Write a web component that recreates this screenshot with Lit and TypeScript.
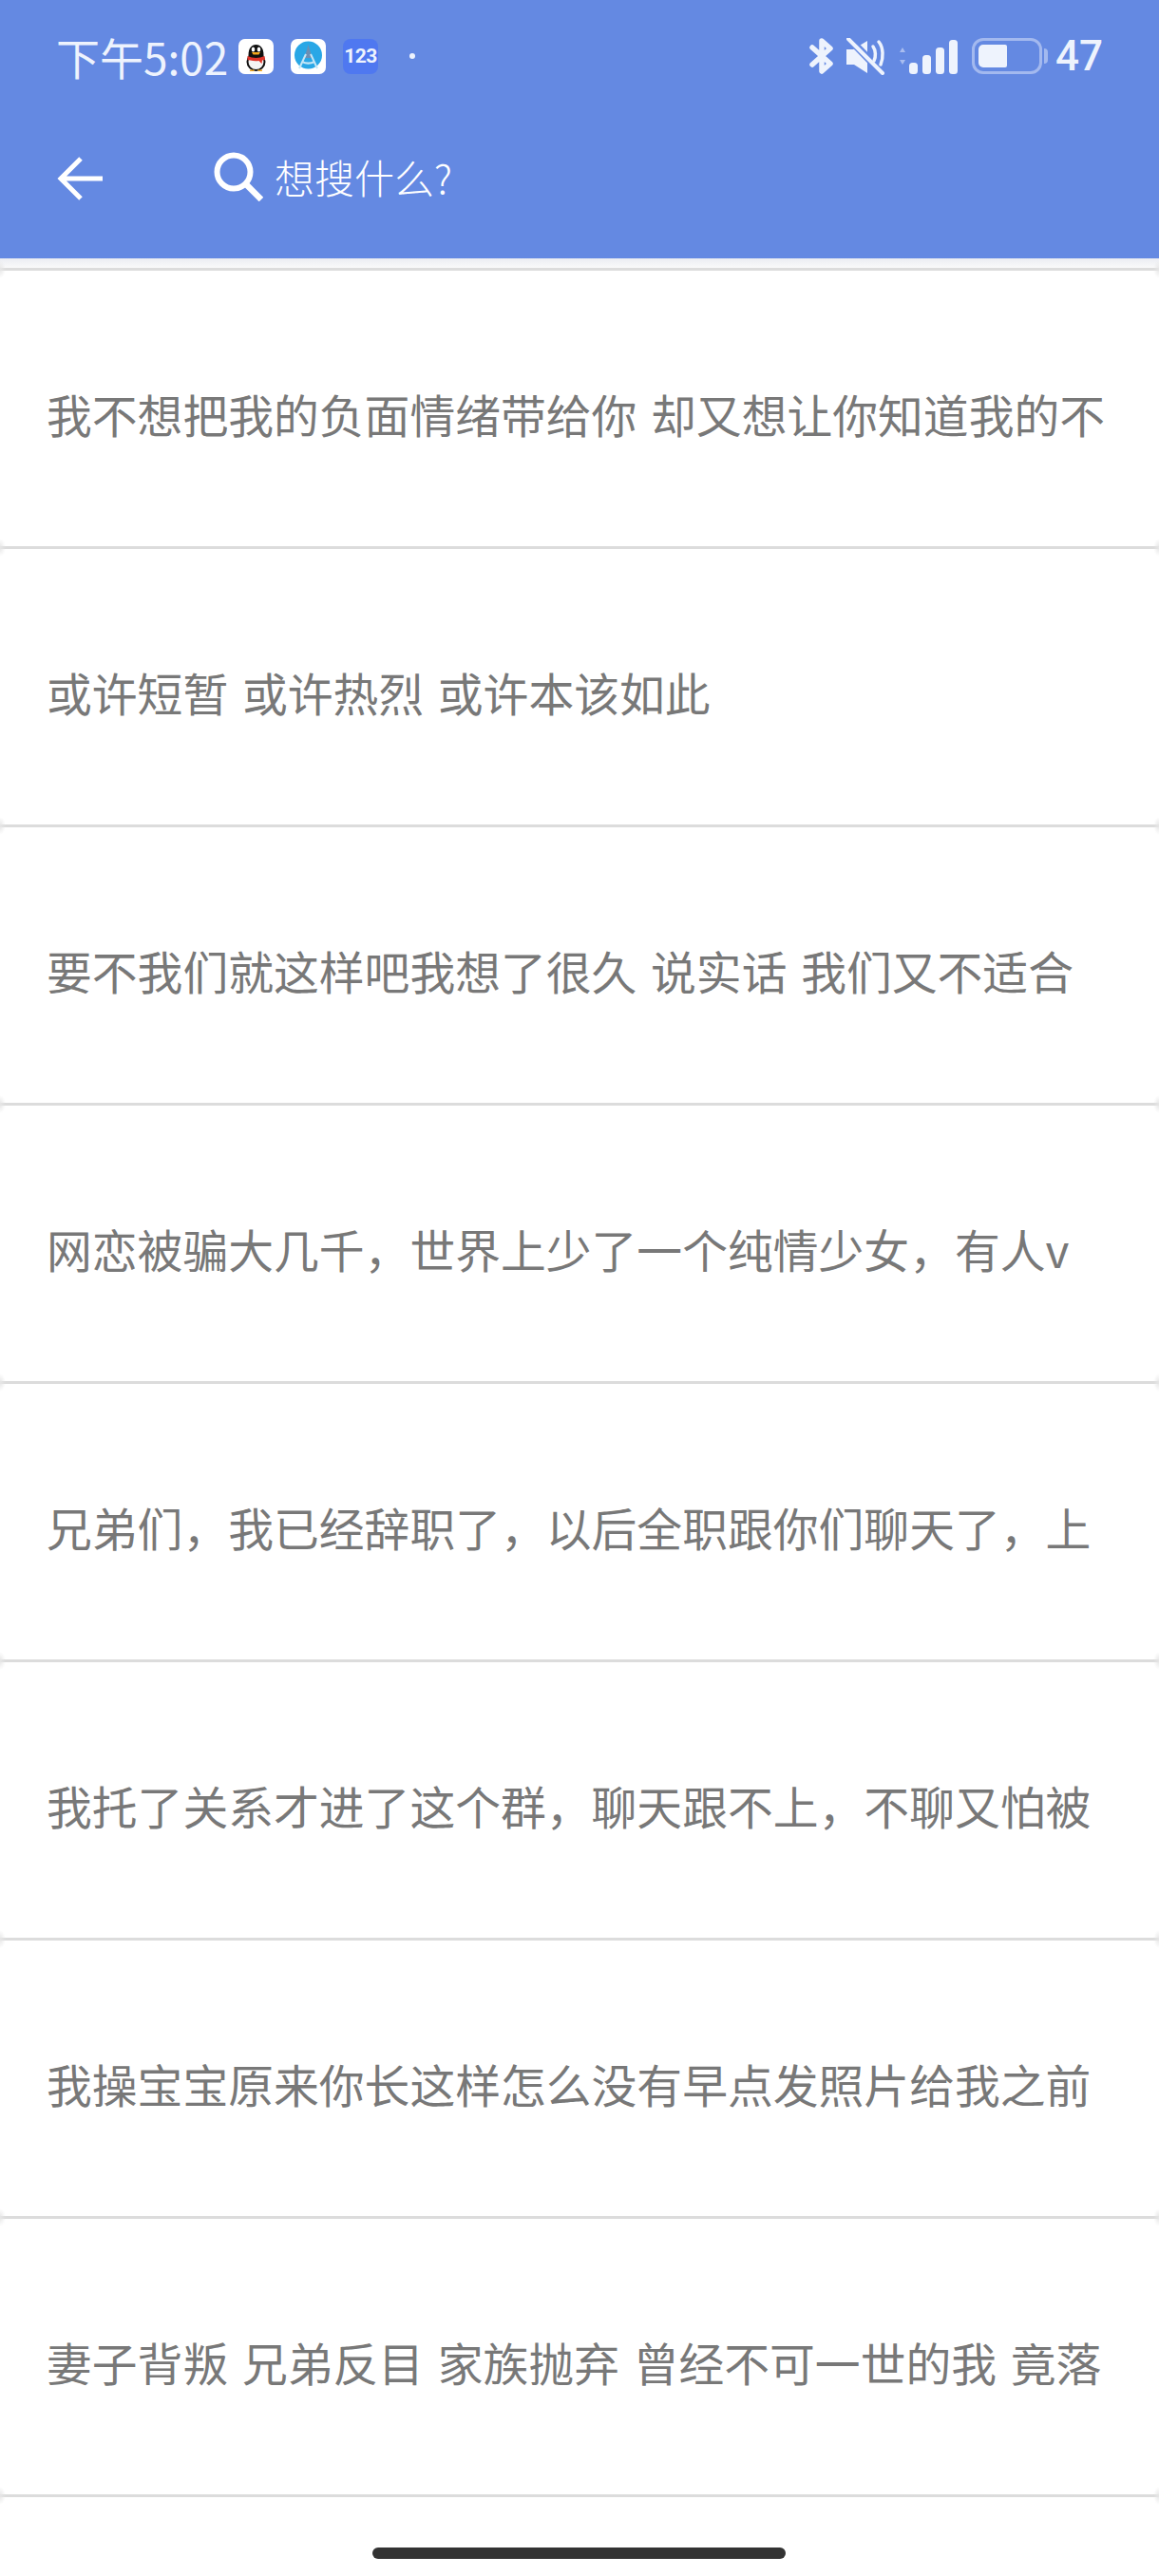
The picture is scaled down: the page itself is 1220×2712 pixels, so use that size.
import { LitElement, html, css, svg } from "lit";
import { customElement } from "lit/decorators.js";

const ROWS = [
  "我不想把我的负面情绪带给你 却又想让你知道我的不",
  "或许短暂 或许热烈 或许本该如此",
  "要不我们就这样吧我想了很久 说实话 我们又不适合",
  "网恋被骗大几千，世界上少了一个纯情少女，有人v",
  "兄弟们，我已经辞职了，以后全职跟你们聊天了，上",
  "我托了关系才进了这个群，聊天跟不上，不聊又怕被",
  "我操宝宝原来你长这样怎么没有早点发照片给我之前",
  "妻子背叛 兄弟反目 家族抛弃 曾经不可一世的我 竟落",
];

const qq = svg`<svg class="ic" viewBox="0 0 37 37">
  <rect width="37" height="37" rx="7" fill="#fff"/>
  <ellipse cx="18.500" cy="24" rx="9" ry="9" fill="#f4f4f4" stroke="#111" stroke-width="2"/>
  <path d="M10.500 17c0-7 3-11 8-11s8 4 8 11v3H10.500z" fill="#111"/>
  <ellipse cx="15.500" cy="11" rx="1.800" ry="2.500" fill="#fff"/>
  <ellipse cx="21.500" cy="11" rx="1.800" ry="2.500" fill="#fff"/>
  <path d="M14 14h9l-1.500 2.500h-6z" fill="#f2a81d"/>
  <path d="M9.500 18c6 2.500 12 2.500 18 0l.5 4-3 .5-.5 3.500-3-3c-3 .5-6 .3-9-.5l-3-.5z" fill="#e0352b"/>
  <path d="M12 32.500h5l-1 1.500h-4zM20 32.500h5v1.500h-4z" fill="#f2a81d"/>
</svg>`;

const studio = svg`<svg class="ic" viewBox="0 0 37 37">
  <rect width="37" height="37" rx="7" fill="#fff"/>
  <circle cx="18.500" cy="17" r="14.500" fill="#29a7e6"/>
  <path d="M18.500 6l4 14h-8z" fill="#6d8fb3"/>
  <path d="M16 16L9 31M21 16l7 15M12 24c4 2 9 2 13 0" fill="none" stroke="#c4e6f6" stroke-width="2"/>
</svg>`;

const arrowIcon = svg`<svg class="back" viewBox="0 0 48 48">
  <path d="M48 24H4M25 3L4 24l21 21" fill="none" stroke="#fff" stroke-width="5"/>
</svg>`;

const searchIcon = svg`<svg class="search" viewBox="0 0 52 52">
  <circle cx="21" cy="21" r="17.500" fill="none" stroke="#fff" stroke-width="6"/>
  <path d="M33.500 33.500L50 50" fill="none" stroke="#fff" stroke-width="6.500"/>
</svg>`;

const bluetooth = svg`<svg class="bt" viewBox="0 0 27 38">
  <path d="M3 10l19 17-9 8V3l9 8L3 28" fill="none" stroke="#eef3fd" stroke-width="5.500" stroke-linejoin="round" stroke-linecap="round"/>
</svg>`;

const mute = svg`<svg class="mute" viewBox="0 0 42 39">
  <path d="M0 12h7L22 3v34L8 28H0z" fill="#eef3fd"/>
  <path d="M3 1l35 36" stroke="#6489e2" stroke-width="8"/>
  <path d="M2 1l36 36" stroke="#eef3fd" stroke-width="4" stroke-linecap="round"/>
  <path d="M28 9c3 4 3 11 1 15M34 4c5 6 5 17 2 24" fill="none" stroke="#eef3fd" stroke-width="3.500" stroke-linecap="round"/>
</svg>`;

const signal = svg`<svg class="signal" viewBox="0 0 65 36">
  <path d="M3 13l3-5 3 5zM3 21l3 5 3-5z" fill="#a9bdf0"/>
  <rect x="13" y="24" width="9" height="12" rx="3.500" fill="#eef3fd"/>
  <rect x="27" y="16" width="9" height="20" rx="3.500" fill="#eef3fd"/>
  <rect x="41" y="8" width="9" height="28" rx="3.500" fill="#eef3fd"/>
  <rect x="55" y="0" width="9" height="36" rx="3.500" fill="#eef3fd"/>
</svg>`;

@customElement("app-root")
export class AppRoot extends LitElement {
  static styles = css`
    :host {
      display: block;
      width: 1220px;
      height: 2712px;
      background: #fff;
      overflow: hidden;
      position: relative;
      font-family: "Noto Sans CJK SC", "Noto Sans", sans-serif;
    }
    .header {
      height: 272px;
      background: #6489e2;
      display: flex;
      flex-direction: column;
      color: #fff;
    }
    .status {
      height: 118px;
      display: flex;
      align-items: center;
      padding-left: 59px;
      padding-right: 59px;
      box-sizing: border-box;
    }
    .time {
      font-size: 46px;
      line-height: 50px;
      color: #eef3fd;
      width: 192px;
      white-space: nowrap;
    }
    .notif { display: flex; align-items: center; gap: 18px; }
    .ic { width: 37px; height: 37px; display: block; }
    .badge {
      width: 37px;
      height: 37px;
      border-radius: 8px;
      background: #4f78f0;
      color: #eef3fd;
      font: 700 21px/37px "Roboto", sans-serif;
      text-align: center;
      letter-spacing: -0.5px;
    }
    .dot {
      width: 6px;
      height: 6px;
      border-radius: 50%;
      background: #eef3fd;
      margin-left: 15px;
    }
    .sys {
      margin-left: auto;
      display: flex;
      align-items: center;
    }
    .bt { width: 27px; height: 38px; display: block; }
    .mute { width: 42px; height: 39px; display: block; margin-left: 12px; }
    .signal { width: 65px; height: 36px; display: block; margin-left: 11px; margin-top: 2px; }
    .battery {
      width: 74px;
      height: 38px;
      margin-left: 14px;
      box-sizing: border-box;
      border: 3px solid #a3b9ef;
      border-radius: 12px;
      padding: 4px;
    }
    .battery i {
      display: block;
      width: 30px;
      height: 100%;
      background: #eef3fd;
      border-radius: 5px 2px 2px 5px;
    }
    .tip {
      width: 4px;
      height: 16px;
      margin-left: 2px;
      background: #a3b9ef;
      border-radius: 0 4px 4px 0;
    }
    .pct {
      font: 500 44px/50px "Roboto", sans-serif;
      color: #eef3fd;
      margin-left: 8px;
    }
    .bar {
      flex: 1;
      display: flex;
      align-items: center;
      padding: 0 0 18px 60px;
      box-sizing: border-box;
    }
    .back { width: 48px; height: 48px; display: block; margin-top: 3px; }
    .search { width: 52px; height: 52px; display: block; margin-left: 117px; }
    .ph {
      font-size: 42px;
      line-height: 52px;
      margin-left: 12px;
      font-weight: 300;
      white-space: nowrap;
    }
    .strip {
      height: 10px;
      background: linear-gradient(#eaecf2, #fafafa);
    }
    .list { display: flex; flex-direction: column; }
    .row {
      height: 290px;
      border-top: 3px solid #dcdcdc;
      padding-left: 49px;
      display: flex;
      align-items: center;
      font-size: 47.800px;
      word-spacing: 4px;
      line-height: 60px;
      color: #787878;
      white-space: nowrap;
      position: relative;
    }
    .row::before,
    .row::after {
      content: "";
      position: absolute;
      top: -11px;
      width: 6px;
      height: 19px;
    }
    .row::before {
      left: 0;
      background: radial-gradient(ellipse at left, #e6e6e6, rgba(255, 255, 255, 0) 70%);
    }
    .row::after {
      right: 0;
      background: radial-gradient(ellipse at right, #e6e6e6, rgba(255, 255, 255, 0) 70%);
    }
    .row span { position: relative; top: 6px; }
    .row.end { height: 0; }
    .home {
      position: absolute;
      left: 392px;
      top: 2682px;
      width: 435px;
      height: 12px;
      border-radius: 6px;
      background: #333;
    }
  `;

  render() {
    return html`
      <div class="header">
        <div class="status">
          <div class="time">下午5:02</div>
          <div class="notif">
            ${qq}${studio}
            <div class="badge">123</div>
            <div class="dot"></div>
          </div>
          <div class="sys">
            ${bluetooth}${mute}${signal}
            <div class="battery"><i></i></div>
            <div class="tip"></div>
            <div class="pct">47</div>
          </div>
        </div>
        <div class="bar">
          ${arrowIcon}${searchIcon}
          <div class="ph">想搜什么?</div>
        </div>
      </div>
      <div class="strip"></div>
      <div class="list">
        ${ROWS.map((t) => html`<div class="row"><span>${t}</span></div>`)}
        <div class="row end"></div>
      </div>
      <div class="home"></div>
    `;
  }
}
